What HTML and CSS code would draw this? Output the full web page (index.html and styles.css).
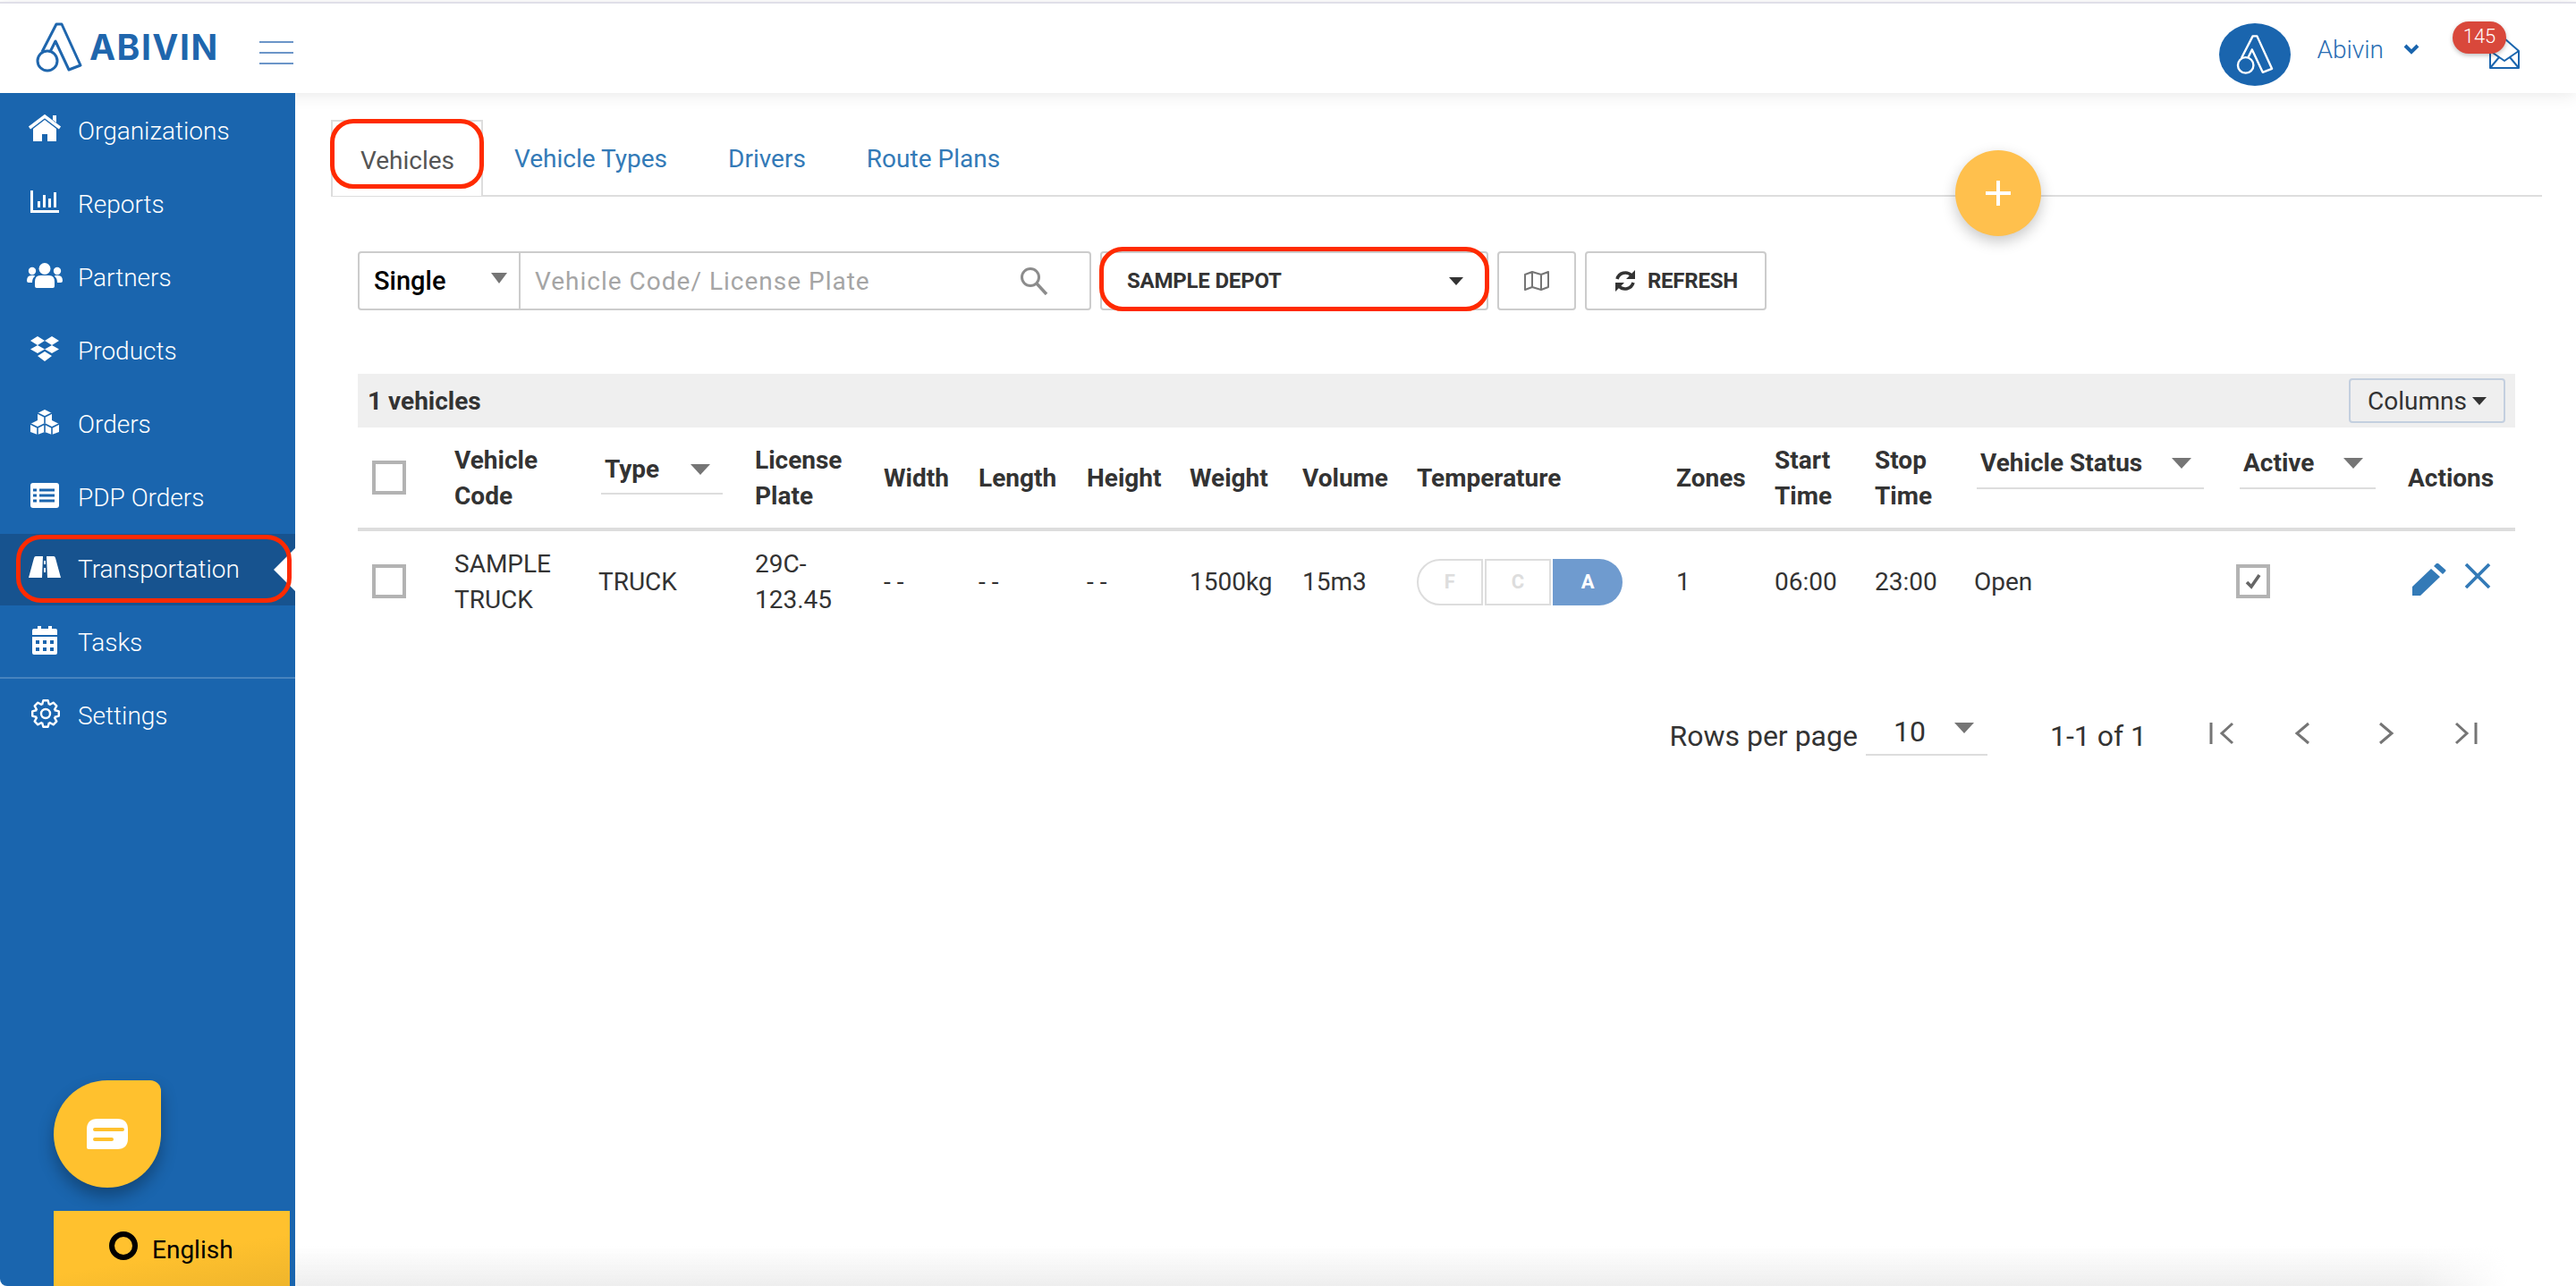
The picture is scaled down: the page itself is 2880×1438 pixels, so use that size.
FILE: index.html
```html
<!DOCTYPE html>
<html lang="en">
<head>
  <meta charset="UTF-8" />
  <title>Abivin - Vehicles</title>
  <link rel="stylesheet" href="styles.css">
</head>
<body>
  <svg class="defs" width="0" height="0">
    <symbol id="mark" viewBox="0 0 54 58">
      <circle cx="14" cy="44" r="11" fill="none" stroke="currentColor" stroke-width="3"/>
      <path d="M8 34 L24 3 H30 L51 49 L38 54 L23 22 L17 34" fill="none" stroke="currentColor" stroke-width="3" stroke-linejoin="round"/>
    </symbol>
    <path id="tooth" d="M-4 -9.7 L-2.6 -14.8 H2.6 L4 -9.7"/>
  </svg>

  <div class="header">
    <div class="logo">
      <svg class="logo-mark" width="54" height="58"><use href="#mark"/></svg>
      <span class="logo-text">ABIVIN</span>
    </div>
    <div class="burger"><i></i><i></i><i></i></div>
    <div class="user">
      <div class="avatar"><svg width="46" height="46"><use href="#mark"/></svg></div>
      <span class="user-name">Abivin</span>
      <svg class="user-caret" width="18" height="12" viewBox="0 0 18 12"><path d="M2 2 L9 9 L16 2" fill="none" stroke="currentColor" stroke-width="4"/></svg>
      <div class="inbox">
        <svg width="36" height="36" viewBox="0 0 36 36"><path d="M2 15 L18 1 L34 15 V34 H2 Z M2 15 L18 26 L34 15 M2 34 L12 22 M34 34 L24 22" fill="none" stroke="currentColor" stroke-width="2" stroke-linejoin="round"/></svg>
        <span class="badge">145</span>
      </div>
    </div>
  </div>

  <div class="layout">
    <div class="sidebar">
      <div class="nav">
        <a class="nav-item">
          <svg width="40" height="32" viewBox="0 0 40 32"><path d="M3 15 L20 2 L37 15" fill="none" stroke="#fff" stroke-width="3.5"/><path d="M29 1 H33 V9 L29 6 Z M7 16 L20 6 L33 16 V30 H23 V22 H17 V30 H7 Z" fill="#fff"/></svg>
          Organizations
        </a>
        <a class="nav-item">
          <svg width="40" height="26" viewBox="0 0 40 26"><path d="M4 0 H7 V22 H36 V25 H4 Z M12 12 H15 V19 H12 Z M18 5 H21 V19 H18 Z M24 9 H27 V19 H24 Z M30 2 H33 V19 H30 Z" fill="#fff"/></svg>
          Reports
        </a>
        <a class="nav-item">
          <svg width="40" height="28" viewBox="0 0 40 28" fill="#fff"><circle cx="20" cy="6.5" r="6.5"/><circle cx="6" cy="9" r="4.2"/><circle cx="34" cy="9" r="4.2"/><path d="M9 26 V21 Q9 14 15 14 H25 Q31 14 31 21 V26 Q31 28 29 28 H11 Q9 28 9 26 Z M0 20 Q0 14 5 14 H8 Q9 14 9 15 Q6 17 6 22 H2 Q0 22 0 20 Z M40 20 Q40 14 35 14 H32 Q31 14 31 15 Q34 17 34 22 H38 Q40 22 40 20 Z"/></svg>
          Partners
        </a>
        <a class="nav-item">
          <svg width="40" height="28" viewBox="0 0 40 28" fill="#fff"><path d="M12 0 L20 5 L12 10 L4 5 Z M28 0 L36 5 L28 10 L20 5 Z M12 10 L20 14.5 L12 19 L4 14.5 Z M28 10 L36 14.5 L28 19 L20 14.5 Z M20 17 L28 22 L20 28 L12 22 Z"/></svg>
          Products
        </a>
        <a class="nav-item">
          <svg width="40" height="28" viewBox="0 0 40 28"><path d="M20 0 L28 4 V12 L36 16 V25 L28 28 L20 25 L12 28 L4 25 V16 L12 12 V4 Z" fill="#fff"/><path d="M12 4 L20 8 L28 4 M20 8 V15 M4 16 L12 20 L20 16 L28 20 L36 16 M12 20 V28 M28 20 V28 M20 16 V25" fill="none" stroke="#1a65ae" stroke-width="1.6"/></svg>
          Orders
        </a>
        <a class="nav-item">
          <svg width="40" height="28" viewBox="0 0 40 28"><rect x="4" width="32" height="28" rx="3" fill="#fff"/><path d="M14 8 H31 M14 14 H31 M14 20 H31 M7 8 H11 M7 14 H11 M7 20 H11" stroke="#1a65ae" stroke-width="3"/></svg>
          PDP Orders
        </a>
        <a class="nav-item active">
          <svg width="40" height="24" viewBox="0 0 40 24"><path d="M2 24 L8 2 Q8.500 0 10 0 H30 Q31.500 0 32 2 L38 24 Z" fill="#fff"/><path d="M18 0 H22 L23 24 H17 Z" fill="#17538f"/><path d="M19 5 H21 V9 H19 Z M19 13 H21 V18 H19 Z" fill="#fff"/></svg>
          Transportation
        </a>
        <a class="nav-item nav-last">
          <svg width="40" height="32" viewBox="0 0 40 32"><path d="M8 3 H12 V0 H16 V3 H24 V0 H28 V3 H32 Q34 3 34 5 V10 H6 V5 Q6 3 8 3 Z M6 12 H34 V30 Q34 32 32 32 H8 Q6 32 6 30 Z" fill="#fff"/><path d="M10 16 H14 V20 H10 Z M18 16 H22 V20 H18 Z M26 16 H30 V20 H26 Z M10 24 H14 V28 H10 Z M18 24 H22 V28 H18 Z M26 24 H30 V28 H26 Z" fill="#1a65ae"/></svg>
          Tasks
        </a>
        <a class="nav-item">
          <svg width="40" height="34" viewBox="0 0 40 34"><g transform="translate(21 17)" fill="none" stroke="#fff" stroke-width="2.4" stroke-linejoin="round"><use href="#tooth"/><use href="#tooth" transform="rotate(45)"/><use href="#tooth" transform="rotate(90)"/><use href="#tooth" transform="rotate(135)"/><use href="#tooth" transform="rotate(180)"/><use href="#tooth" transform="rotate(225)"/><use href="#tooth" transform="rotate(270)"/><use href="#tooth" transform="rotate(315)"/><circle r="5"/></g></svg>
          Settings
        </a>
      </div>
      <div class="chat">
        <svg width="46" height="34" viewBox="0 0 46 34"><path d="M12 0 H34 Q46 0 46 12 V22 Q46 34 34 34 H2 Q0 34 0 32 V12 Q0 0 12 0 Z" fill="#fff"/><path d="M9 12 H40 M9 23 H28" stroke="#ffc12e" stroke-width="4" stroke-linecap="round"/></svg>
      </div>
      <div class="lang">
        <span class="lang-ring"></span>
        English
      </div>
    </div>

    <div class="main">
      <div class="tabs">
        <a class="tab tab-current marked">Vehicles</a>
        <a class="tab">Vehicle Types</a>
        <a class="tab">Drivers</a>
        <a class="tab">Route Plans</a>
      </div>
      <div class="fab"></div>

      <div class="toolbar">
        <div class="search">
          <div class="search-mode">Single <span class="caret"></span></div>
          <div class="search-input">
            Vehicle Code/ License Plate
            <svg width="32" height="32" viewBox="0 0 32 32"><circle cx="12" cy="12" r="9.5" fill="none" stroke="#8c8c8c" stroke-width="3"/><path d="M19 19 L30 31" stroke="#8c8c8c" stroke-width="3.5"/></svg>
          </div>
        </div>
        <div class="depot marked">SAMPLE DEPOT <span class="caret caret-dark"></span></div>
        <div class="tool-btn map-btn">
          <svg width="28" height="22" viewBox="0 0 28 22"><path d="M1 4 L9 1 L19 4 L27 1 V18 L19 21 L9 18 L1 21 Z M9 1 V18 M19 4 V21" fill="none" stroke="#757575" stroke-width="2" stroke-linejoin="round"/></svg>
        </div>
        <div class="tool-btn refresh-btn">
          <svg width="26" height="24" viewBox="0 0 26 24"><path d="M4 10 A9.5 9.5 0 0 1 20 6 M22 14 A9.5 9.5 0 0 1 6 18" fill="none" stroke="#333" stroke-width="3.6"/><path d="M24 0 V10 H14 Z M2 24 V14 H12 Z" fill="#333"/></svg>
          REFRESH
        </div>
      </div>

      <div class="table-bar">
        <b>1 vehicles</b>
        <div class="columns-btn">Columns <span class="caret caret-dark"></span></div>
      </div>

      <div class="vrow vrow-head">
        <div><span class="check"></span></div>
        <div>Vehicle Code</div>
        <div class="filter filter-type">Type <span class="caret"></span></div>
        <div>License Plate</div>
        <div>Width</div>
        <div>Length</div>
        <div>Height</div>
        <div>Weight</div>
        <div>Volume</div>
        <div>Temperature</div>
        <div>Zones</div>
        <div>Start Time</div>
        <div>Stop Time</div>
        <div class="filter filter-status">Vehicle Status <span class="caret"></span></div>
        <div class="filter filter-active">Active <span class="caret"></span></div>
        <div>Actions</div>
      </div>

      <div class="vrow">
        <div><span class="check"></span></div>
        <div>SAMPLE TRUCK</div>
        <div>TRUCK</div>
        <div>29C-<br>123.45</div>
        <div>- -</div>
        <div>- -</div>
        <div>- -</div>
        <div>1500kg</div>
        <div>15m3</div>
        <div class="temp">
          <span class="temp-f">F</span>
          <span class="temp-c">C</span>
          <span class="temp-a">A</span>
        </div>
        <div>1</div>
        <div>06:00</div>
        <div>23:00</div>
        <div>Open</div>
        <div class="cell-active">
          <span class="check"><svg width="24" height="22" viewBox="0 0 24 22"><path d="M5 12 L10 17 L19 4" fill="none" stroke="#666" stroke-width="3.6"/></svg></span>
        </div>
        <div class="actions">
          <svg width="38" height="36" viewBox="0 0 38 36" fill="#337ab7"><path d="M0 36 V26 L21 6 L31 15 L9 36 Z M24 3 L27 0 Q28 -1 29 0 L37 7 Q38 8 37 9 L34 12 Z"/></svg>
          <svg width="30" height="28" viewBox="0 0 30 28"><path d="M2 1 L28 27 M28 1 L2 27" stroke="#337ab7" stroke-width="3.6"/></svg>
        </div>
      </div>

      <div class="pager">
        <span>Rows per page</span>
        <div class="pager-select">10 <span class="caret"></span></div>
        <span class="pager-range">1-1 of 1</span>
        <div class="pager-icons">
          <svg width="40" height="26" viewBox="0 0 40 26"><path d="M8 1 V25 M32 2 L20 13 L32 24" fill="none" stroke="#757575" stroke-width="3"/></svg>
          <svg width="40" height="26" viewBox="0 0 40 26"><path d="M26 2 L13 13 L26 24" fill="none" stroke="#757575" stroke-width="3"/></svg>
          <svg width="40" height="26" viewBox="0 0 40 26"><path d="M15 2 L28 13 L15 24" fill="none" stroke="#757575" stroke-width="3"/></svg>
          <svg width="40" height="26" viewBox="0 0 40 26"><path d="M31 1 V25 M9 2 L21 13 L9 24" fill="none" stroke="#757575" stroke-width="3"/></svg>
        </div>
      </div>

      <div class="bottom-fade"></div>
    </div>
  </div>
</body>
</html>
```
FILE: styles.css
```css
html {
  background: #111;
}

body {
  margin: 0;
  height: 1438px;
  overflow: hidden;
  display: flex;
  flex-direction: column;
  font-family: Roboto, "Liberation Sans", sans-serif;
  font-size: 28px;
  color: #333;
  background: #fff;
}

.defs {
  position: absolute;
}

.caret {
  display: inline-block;
  width: 0;
  height: 0;
  border-left: 11px solid transparent;
  border-right: 11px solid transparent;
  border-top: 12px solid #757575;
}

.caret-dark {
  border-top-color: #333;
}

/* top bar */
.header {
  position: relative;
  z-index: 2;
  height: 100px;
  margin-top: 2px;
  border-top: 2px solid #e0dfe8;
  display: flex;
  align-items: center;
  background: #fff;
  box-shadow: 0 2px 18px rgba(0, 0, 0, 0.09);
}

.logo {
  display: flex;
  align-items: center;
  width: 290px;
  margin-top: -3px;
  padding-left: 39px;
  box-sizing: border-box;
  color: #1f66ad;
}

.logo-mark {
  margin-right: 7px;
}

.logo-text {
  font-family: Inter, "Open Sans", sans-serif;
  font-weight: 700;
  font-size: 39px;
  letter-spacing: 1.500px;
}

.burger {
  display: flex;
  flex-direction: column;
  gap: 10px;
  width: 38px;
  margin-top: 10px;
}

.burger i {
  display: block;
  height: 2px;
  background: #6b95c8;
}

.user {
  margin-left: auto;
  display: flex;
  align-items: center;
  color: #1a65ae;
}

.avatar {
  width: 80px;
  height: 70px;
  margin-top: 14px;
  border-radius: 50%;
  background: #1a65ae;
  color: #fff;
  display: flex;
  align-items: center;
  justify-content: center;
}

.user-name {
  margin-left: 30px;
  margin-top: 2px;
  font-weight: 300;
  font-size: 28px;
  color: #2a6db3;
}

.user-caret {
  margin-left: 22px;
  margin-top: 2px;
}

.inbox {
  position: relative;
  width: 36px;
  height: 36px;
  margin: 12px 62px 0 77px;
}

.inbox svg {
  display: block;
}

.badge {
  position: absolute;
  left: -40px;
  top: -18px;
  width: 60px;
  height: 36px;
  border-radius: 18px;
  background: #d9483b;
  color: #fff;
  font-size: 22px;
  font-weight: 300;
  line-height: 34px;
  text-align: center;
  box-shadow: 0 2px 5px rgba(0, 0, 0, 0.25);
}

.layout {
  flex: 1;
  display: flex;
  min-height: 0;
}

/* sidebar */
.sidebar {
  position: relative;
  z-index: 3;
  width: 330px;
  flex-shrink: 0;
  display: flex;
  flex-direction: column;
  background: #1a65ae;
  border-bottom-left-radius: 8px;
}

.nav {
  padding-top: 1px;
}

.nav-item {
  position: relative;
  height: 82px;
  padding-left: 30px;
  display: flex;
  align-items: center;
  gap: 17px;
  color: #fff;
  font-weight: 300;
  box-sizing: border-box;
}

.nav-item svg {
  flex-shrink: 0;
  margin-top: -4px;
}

.nav-last {
  padding-top: 2px;
  border-bottom: 2px solid rgba(255, 255, 255, 0.2);
}

.nav-item.active {
  height: 80px;
  padding-bottom: 2px;
  background: #17538f;
}

.nav-item.active::before {
  content: "";
  position: absolute;
  right: 0;
  top: 16px;
  border-top: 24px solid transparent;
  border-bottom: 24px solid transparent;
  border-right: 24px solid #fff;
}

.nav-item.active::after {
  content: "";
  position: absolute;
  left: 18px;
  right: 4px;
  top: 1px;
  bottom: 3px;
  border: 5px solid #ff2a00;
  border-radius: 28px;
}

.chat {
  margin: auto 0 0 60px;
  width: 120px;
  height: 120px;
  border-radius: 60px 12px 60px 60px;
  background: #ffc12e;
  box-shadow: 0 10px 18px rgba(0, 0, 0, 0.3);
  display: flex;
  align-items: center;
  justify-content: center;
}

.lang {
  margin: 26px 0 0 60px;
  width: 264px;
  height: 84px;
  display: flex;
  align-items: center;
  padding: 2px 0 0 62px;
  gap: 16px;
  box-sizing: border-box;
  color: #000;
  background: linear-gradient(170deg, #ffc12e 55%, #efb52c 100%);
}

.lang-ring {
  width: 32px;
  height: 32px;
  margin-top: -8px;
  border: 6px solid #000;
  border-radius: 50%;
  box-sizing: border-box;
}

/* content */
.main {
  position: relative;
  flex: 1;
  min-width: 0;
  padding: 30px 38px 0 40px;
}

.tabs {
  display: flex;
  height: 84px;
  border-bottom: 2px solid #ddd;
}

.tab {
  position: relative;
  height: 84px;
  padding: 3px 33px 0;
  margin-right: 2px;
  display: flex;
  align-items: center;
  box-sizing: border-box;
  color: #337ab7;
}

.tab-current {
  width: 170px;
  background: #fff;
  color: #555;
  border: solid #ddd;
  border-width: 2px 2px 0;
  height: 85px;
  padding: 3px 31px 0;
}

.marked::after {
  content: "";
  position: absolute;
  border: 5px solid #ff2a00;
  border-radius: 26px;
}

.tab-current::after {
  left: -3px;
  right: -3px;
  top: -3px;
  bottom: 8px;
}

.fab {
  position: absolute;
  left: 1856px;
  top: 64px;
  width: 96px;
  height: 96px;
  border-radius: 50%;
  background:
    linear-gradient(#fff, #fff) center / 28px 4px no-repeat,
    linear-gradient(#fff, #fff) center / 4px 28px no-repeat,
    #ffc04d;
  box-shadow: 0 6px 16px rgba(0, 0, 0, 0.22);
}

.toolbar {
  display: flex;
  gap: 10px;
  height: 66px;
  margin: 61px 0 0 30px;
}

.search {
  width: 820px;
  display: flex;
  border: 2px solid #ccc;
  border-radius: 4px;
  box-sizing: border-box;
}

.search-mode {
  width: 180px;
  padding: 0 13px 0 16px;
  display: flex;
  align-items: center;
  justify-content: space-between;
  box-sizing: border-box;
  border-right: 2px solid #ccc;
  color: #000;
  font-size: 29px;
  font-weight: 500;
}

.search-mode .caret {
  margin-top: -6px;
  border-left-width: 9px;
  border-right-width: 9px;
}

.search-input {
  flex: 1;
  padding: 0 46px 0 16px;
  display: flex;
  align-items: center;
  justify-content: space-between;
  color: #a5a5a5;
  letter-spacing: 1px;
}

.depot {
  position: relative;
  width: 434px;
  padding: 0 26px 0 28px;
  display: flex;
  align-items: center;
  justify-content: space-between;
  box-sizing: border-box;
  font-size: 24px;
  font-weight: 700;
  letter-spacing: -0.200px;
  border: 2px solid #ccc;
  border-radius: 4px;
}

.depot .caret {
  border-left-width: 8px;
  border-right-width: 8px;
  border-top-width: 9px;
}

.depot::after {
  left: -3px;
  right: -3px;
  top: -7px;
  bottom: -3px;
}

.tool-btn {
  display: flex;
  align-items: center;
  justify-content: center;
  border: 2px solid #ccc;
  border-radius: 4px;
  box-sizing: border-box;
  font-size: 24px;
  font-weight: 700;
  letter-spacing: -0.200px;
}

.map-btn {
  width: 88px;
}

.refresh-btn {
  width: 203px;
  gap: 12px;
}

.table-bar {
  height: 60px;
  margin: 71px 30px 0 30px;
  padding: 0 11px;
  display: flex;
  align-items: center;
  justify-content: space-between;
  background: #efefef;
}

.table-bar b {
  font-weight: 700;
}

.columns-btn {
  width: 175px;
  height: 50px;
  display: flex;
  align-items: center;
  justify-content: center;
  gap: 6px;
  box-sizing: border-box;
  border: 2px solid #c3cfdf;
  border-radius: 4px;
}

.columns-btn .caret {
  border-left-width: 8px;
  border-right-width: 8px;
  border-top-width: 9px;
}

/* vehicle table */
.vrow {
  display: grid;
  grid-template-columns: 108px 161px 175px 144px 106px 121px 115px 126px 128px 290px 110px 112px 111px 297px 188px 120px;
  align-items: center;
  height: 114px;
  margin: 0 30px;
  line-height: 40px;
}

.vrow > div:nth-child(2) {
  padding-right: 40px;
}

.vrow-head {
  height: 116px;
  padding-top: 2px;
  border-bottom: 4px solid #ddd;
  box-sizing: border-box;
  font-weight: 700;
}

.check {
  display: flex;
  align-items: center;
  justify-content: center;
  width: 38px;
  height: 38px;
  margin: -2px 0 0 16px;
  border: 4px solid #b3b3b3;
  box-sizing: border-box;
}

.check svg {
  flex-shrink: 0;
}

.cell-active .check {
  margin-left: -4px;
}

.filter {
  display: flex;
  align-items: center;
  justify-content: space-between;
  align-self: start;
  box-sizing: border-box;
  border-bottom: 2px solid #ddd;
  padding: 0 14px 0 4px;
}

.filter-type {
  height: 55px;
  margin: 18px 36px 0 3px;
}

.filter-status {
  height: 57px;
  margin: 10px 40px 0 3px;
}

.filter-active {
  height: 57px;
  margin: 10px 36px 0 0;
}

.temp {
  display: flex;
  gap: 2px;
  width: 230px;
  height: 52px;
  font-size: 22px;
  font-weight: 700;
  color: #ddd;
}

.temp span {
  display: flex;
  align-items: center;
  justify-content: center;
  box-sizing: border-box;
  border: 2px solid #ddd;
}

.temp-f {
  width: 74px;
  border-radius: 26px 0 0 26px;
}

.temp-c {
  width: 75px;
}

.temp .temp-a {
  width: 78px;
  border: 0;
  border-radius: 0 26px 26px 0;
  background: #6f9bcf;
  color: #fff;
}

.actions {
  display: flex;
  align-items: flex-start;
  gap: 20px;
  margin: -6px 0 0 5px;
}

.pager {
  display: flex;
  align-items: center;
  justify-content: flex-end;
  height: 45px;
  margin: 92px 65px 0 0;
  font-size: 32px;
}

.pager-select {
  width: 136px;
  height: 45px;
  margin-left: 9px;
  padding: 0 15px 8px 31px;
  display: flex;
  align-items: center;
  justify-content: space-between;
  box-sizing: border-box;
  border-bottom: 2px solid #ddd;
}

.pager-select .caret {
  margin-top: -8px;
}

.pager-range {
  margin: 0 64px 0 70px;
}

.pager-icons {
  display: flex;
  gap: 51px;
  margin-bottom: 6px;
}

.pager-icons svg {
  display: block;
}

.bottom-fade {
  position: absolute;
  left: 0;
  right: 0;
  bottom: 0;
  height: 45px;
  background: linear-gradient(rgba(238, 238, 238, 0), #eee);
  -webkit-mask-image: linear-gradient(to right, #000 93%, transparent 97%);
  mask-image: linear-gradient(to right, #000 93%, transparent 97%);
}
```
